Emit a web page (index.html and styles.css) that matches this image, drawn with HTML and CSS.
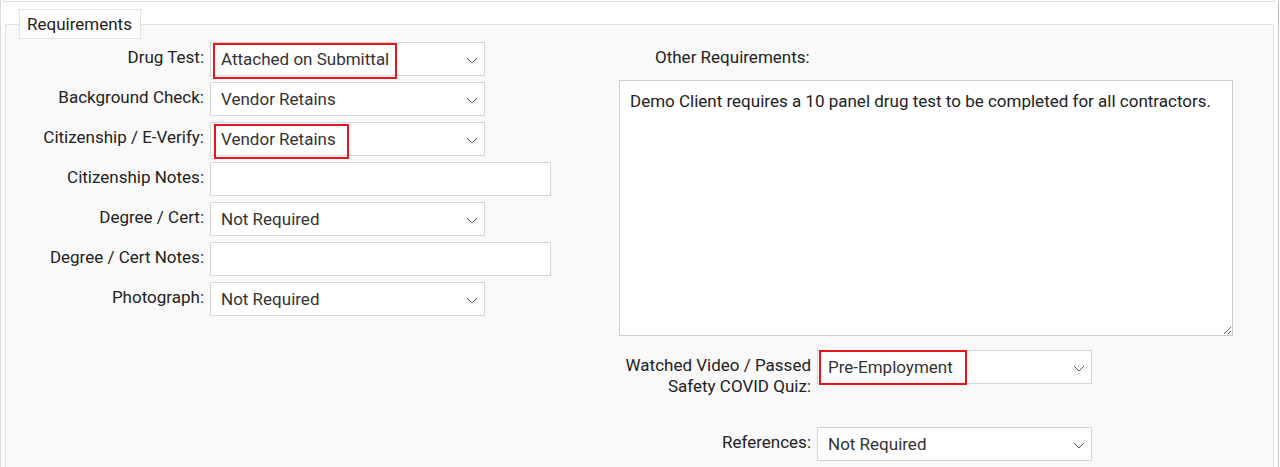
FILE: index.html
```html
<!DOCTYPE html>
<html lang="en">
<head>
  <meta charset="UTF-8">
  <meta name="viewport" content="width=device-width, initial-scale=1.0">
  <title>Requirements</title>
  <link rel="stylesheet" href="styles.css">
</head>
<body>
  <div class="page">
    <div class="prev-section"></div>

    <fieldset class="requirements">
      <legend>Requirements</legend>

      <div class="columns">
        <div class="col-left">
          <label class="field-label" for="drug">Drug Test:</label>
          <div class="select-wrap">
            <select id="drug"><option>Attached on Submittal</option></select>
            <svg class="chevron" width="12" height="7" viewBox="0 0 12 7"><path d="M1 1 L6 6 L11 1" /></svg>
            <span class="mark mark-drug"></span>
          </div>

          <label class="field-label" for="bg">Background Check:</label>
          <div class="select-wrap">
            <select id="bg"><option>Vendor Retains</option></select>
            <svg class="chevron" width="12" height="7" viewBox="0 0 12 7"><path d="M1 1 L6 6 L11 1" /></svg>
          </div>

          <label class="field-label" for="cit">Citizenship / E-Verify:</label>
          <div class="select-wrap">
            <select id="cit"><option>Vendor Retains</option></select>
            <svg class="chevron" width="12" height="7" viewBox="0 0 12 7"><path d="M1 1 L6 6 L11 1" /></svg>
            <span class="mark mark-cit"></span>
          </div>

          <label class="field-label" for="citnotes">Citizenship Notes:</label>
          <input class="text-input" type="text" id="citnotes">

          <label class="field-label" for="deg">Degree / Cert:</label>
          <div class="select-wrap">
            <select id="deg"><option>Not Required</option></select>
            <svg class="chevron" width="12" height="7" viewBox="0 0 12 7"><path d="M1 1 L6 6 L11 1" /></svg>
          </div>

          <label class="field-label" for="degnotes">Degree / Cert Notes:</label>
          <input class="text-input" type="text" id="degnotes">

          <label class="field-label" for="photo">Photograph:</label>
          <div class="select-wrap">
            <select id="photo"><option>Not Required</option></select>
            <svg class="chevron" width="12" height="7" viewBox="0 0 12 7"><path d="M1 1 L6 6 L11 1" /></svg>
          </div>
        </div>

        <div class="col-right">
          <label class="other-label" for="other">Other Requirements:</label>
          <textarea id="other">Demo Client requires a 10 panel drug test to be completed for all contractors.</textarea>

          <div class="right-grid">
            <label class="field-label two-line" for="covid">Watched Video / Passed<br>Safety COVID Quiz:</label>
            <div class="select-wrap">
              <select id="covid"><option>Pre-Employment</option></select>
              <svg class="chevron" width="12" height="7" viewBox="0 0 12 7"><path d="M1 1 L6 6 L11 1" /></svg>
              <span class="mark mark-covid"></span>
            </div>

            <label class="field-label" for="refs">References:</label>
            <div class="select-wrap">
              <select id="refs"><option>Not Required</option></select>
              <svg class="chevron" width="12" height="7" viewBox="0 0 12 7"><path d="M1 1 L6 6 L11 1" /></svg>
            </div>
          </div>
        </div>
      </div>
    </fieldset>
  </div>
</body>
</html>
```

FILE: styles.css
```css
body {
  margin: 0;
  font-family: Roboto, "Liberation Sans", Arial, sans-serif;
  color: #222;
  background: #fff;
  height: 467px;
  overflow: hidden;
}
.page {
  width: 1279px;
  height: 467px;
  border-left: 1px solid #ddd;
  border-right: 1px solid #bbb;
  padding: 0 2px;
  box-sizing: border-box;
}
.prev-section {
  height: 1px;
  border: 1px solid #ddd;
  border-top: none;
  margin-right: 1px;
}
.requirements {
  margin: 7px 0 0 2px;
  width: 1269px;
  box-sizing: border-box;
  padding: 3px 13px 20px;
  border: 1px solid #e2e2e2;
  background: #f9f9f9;
  min-width: 0;
}
.requirements legend {
  padding: 0 7px;
  height: 30px;
  box-sizing: border-box;
  line-height: 28px;
  font-size: 17px;
  color: #222;
  background: #fff;
  border: 1px solid #e2e2e2;
  width: 122px;
}
.columns {
  display: flex;
}
.col-left {
  width: 600px;
  display: grid;
  grid-template-columns: 185px auto;
  column-gap: 6px;
  row-gap: 6px;
  align-content: start;
  justify-items: start;
}
.field-label {
  justify-self: end;
  text-align: right;
  white-space: nowrap;
  font-size: 17px;
  line-height: 20px;
  padding-top: 5px;
  color: #222;
}
.select-wrap {
  position: relative;
  width: 275px;
  height: 34px;
}
.select-wrap select {
  appearance: none;
  -webkit-appearance: none;
  width: 100%;
  height: 100%;
  box-sizing: border-box;
  border: 1px solid #d6d6d6;
  background: #fff;
  font-family: Roboto, "Liberation Sans", Arial, sans-serif;
  font-size: 17px;
  color: #333;
  padding: 0 30px 0 10px;
  border-radius: 0;
}
.chevron {
  position: absolute;
  right: 7px;
  top: 15px;
  pointer-events: none;
}
.chevron path {
  fill: none;
  stroke: #555;
  stroke-width: 1;
}
.mark {
  position: absolute;
  border: 2px solid #e8141c;
  box-sizing: border-box;
  pointer-events: none;
}
.mark-drug {
  left: 3px;
  top: 1px;
  width: 184px;
  height: 36px;
}
.mark-cit {
  left: 4px;
  top: 2px;
  width: 135px;
  height: 35px;
}
.mark-covid {
  left: 2px;
  top: 0;
  width: 148px;
  height: 35px;
}
.text-input {
  width: 341px;
  height: 34px;
  box-sizing: border-box;
  border: 1px solid #d6d6d6;
  background: #fff;
  font-size: 17px;
  padding: 0 10px;
}
.col-right {
  width: 614px;
  display: flex;
  flex-direction: column;
}
.other-label {
  font-size: 17px;
  line-height: 20px;
  padding: 5px 0 0 36px;
  height: 38px;
  box-sizing: border-box;
}
textarea {
  width: 614px;
  height: 256px;
  box-sizing: border-box;
  border: 1px solid #ccc;
  background: #fff;
  font-family: Roboto, "Liberation Sans", Arial, sans-serif;
  font-size: 17px;
  line-height: 20px;
  color: #222;
  padding: 10px;
  margin: 0;
}
.right-grid {
  margin-top: 14px;
  display: grid;
  grid-template-columns: 192px auto;
  column-gap: 6px;
  row-gap: 30px;
  justify-items: start;
}
.field-label.two-line {
  line-height: 21px;
  padding-top: 5px;
}
```
